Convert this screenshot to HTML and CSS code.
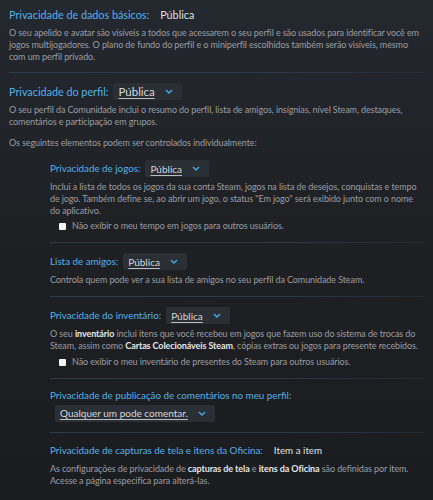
FILE: index.html
```html
<!DOCTYPE html>
<html lang="pt-BR">
<head>
<meta charset="utf-8">
<title>Configurações de privacidade</title>
<link rel="stylesheet" href="styles.css">
</head>
<body>
<main class="privacy">
  <section class="block">
    <div class="row">
      <span class="label">Privacidade de dados básicos:</span>
      <span class="value">Pública</span>
    </div>
    <p class="desc">O seu apelido e avatar são visíveis a todos que acessarem o seu perfil e são usados para identificar você em jogos multijogadores. O plano de fundo do perfil e o miniperfil escolhidos também serão visíveis, mesmo com um perfil privado.</p>
  </section>

  <section class="block">
    <div class="row">
      <span class="label">Privacidade do perfil:</span>
      <span class="dropdown"><span class="dd-text">Pública</span><svg class="chev" viewBox="0 0 8 5" width="8" height="5"><path d="M1 1l3 3 3-3" fill="none" stroke="currentColor" stroke-width="1.4"/></svg></span>
    </div>
    <p class="desc">O seu perfil da Comunidade inclui o resumo do perfil, lista de amigos, insígnias, nível Steam, destaques, comentários e participação em grupos.</p>
    <p class="desc note">Os seguintes elementos podem ser controlados individualmente:</p>

    <div class="sub">
      <section class="block">
        <div class="row">
          <span class="label">Privacidade de jogos:</span>
          <span class="dropdown"><span class="dd-text">Pública</span><svg class="chev" viewBox="0 0 8 5" width="8" height="5"><path d="M1 1l3 3 3-3" fill="none" stroke="currentColor" stroke-width="1.4"/></svg></span>
        </div>
        <p class="desc">Inclui a lista de todos os jogos da sua conta Steam, jogos na lista de desejos, conquistas e tempo de jogo. Também define se, ao abrir um jogo, o status "Em jogo" será exibido junto com o nome do aplicativo.</p>
        <label class="check"><span class="box"></span>Não exibir o meu tempo em jogos para outros usuários.</label>
      </section>

      <section class="block">
        <div class="row">
          <span class="label">Lista de amigos:</span>
          <span class="dropdown"><span class="dd-text">Pública</span><svg class="chev" viewBox="0 0 8 5" width="8" height="5"><path d="M1 1l3 3 3-3" fill="none" stroke="currentColor" stroke-width="1.4"/></svg></span>
        </div>
        <p class="desc">Controla quem pode ver a sua lista de amigos no seu perfil da Comunidade Steam.</p>
      </section>

      <section class="block">
        <div class="row">
          <span class="label">Privacidade do inventário:</span>
          <span class="dropdown"><span class="dd-text">Pública</span><svg class="chev" viewBox="0 0 8 5" width="8" height="5"><path d="M1 1l3 3 3-3" fill="none" stroke="currentColor" stroke-width="1.4"/></svg></span>
        </div>
        <p class="desc">O seu <b>inventário</b> inclui itens que você recebeu em jogos que fazem uso do sistema de trocas do Steam, assim como <b>Cartas Colecionáveis Steam</b>, cópias extras ou jogos para presente recebidos.</p>
        <label class="check check-wide"><span class="box"></span>Não exibir o meu inventário de presentes do Steam para outros usuários.</label>
      </section>

      <section class="block">
        <div class="label label-line">Privacidade de publicação de comentários no meu perfil:</div>
        <span class="dropdown dropdown-wide"><span class="dd-text">Qualquer um pode comentar.</span><svg class="chev" viewBox="0 0 8 5" width="8" height="5"><path d="M1 1l3 3 3-3" fill="none" stroke="currentColor" stroke-width="1.4"/></svg></span>
      </section>

      <section class="block">
        <div class="row">
          <span class="label">Privacidade de capturas de tela e itens da Oficina:</span>
          <span class="value">Item a item</span>
        </div>
        <p class="desc">As configurações de privacidade de <b>capturas de tela</b> e <b>itens da Oficina</b> são definidas por item. Acesse a página específica para alterá-las.</p>
      </section>
    </div>
  </section>
</main>
</body>
</html>
```

FILE: styles.css
```css
html, body {
  margin: 0;
  padding: 0;
}

body {
  width: 433px;
  min-height: 500px;
  background: linear-gradient(180deg, #24282f 0px, #1e2024 230px, #1b1c20 500px);
  font-family: "Lato", "Noto Sans", sans-serif;
  color: #9a9da2;
}

.privacy {
  padding: 6px 8px 0 9px;
}

.block + .block {
  padding-top: 10px;
}

/* thin rule under each block */
.block::after {
  content: "";
  display: block;
  height: 1px;
  margin-top: 9px;
  background: linear-gradient(90deg, #2b3c4d 0%, #2a394a 60%, rgba(40, 52, 66, 0.5) 100%);
}

.block:has(.sub)::after,
.sub .block:last-child::after {
  display: none;
}

.row {
  display: flex;
  align-items: center;
  gap: 5px;
  height: 17px;
}

.label {
  font-size: 10.8px;
  color: #56b1e8;
  line-height: 17px;
  white-space: nowrap;
}

.value {
  font-size: 10.8px;
  color: #dfe1e3;
  line-height: 17px;
  margin-left: 6px;
}

.dropdown {
  display: inline-flex;
  align-items: center;
  height: 17px;
  padding: 0 9px 0 5px;
  gap: 10px;
  background: #2a2e35;
  border-radius: 2px;
}

.dd-text {
  font-size: 11.5px;
  color: #d6d8da;
  text-decoration: underline;
  text-underline-offset: 2px;
  text-decoration-color: #b9bcc0;
}

.chev {
  color: #4aa7e8;
  display: block;
}

.desc {
  margin: 4px 0 0;
  font-size: 9px;
  letter-spacing: -0.1px;
  line-height: 12px;
  color: #9a9da2;
}

.desc b {
  font-weight: 700;
  color: #e4e6e8;
}

.note {
  margin-top: 9px;
}

/* individually controlled settings, indented under the profile */
.sub {
  margin-left: 41px;
  margin-top: 11px;
}

.sub .block::after {
  margin-top: 10px;
}

.sub .label,
.sub .value {
  font-size: 9.8px;
}

.sub .dd-text {
  font-size: 10px;
}

.check {
  display: flex;
  align-items: center;
  gap: 6px;
  margin: 3px 0 0 9px;
  font-size: 9px;
  letter-spacing: -0.1px;
  line-height: 12px;
  color: #9a9da2;
}

.check-wide {
  margin-top: 4px;
}

.box {
  width: 7px;
  height: 7px;
  background: #f3f3f3;
  border-radius: 1px;
  flex: none;
}

.label-line {
  display: block;
  line-height: 12px;
}

.dropdown-wide {
  margin: -3px 0 0 5px;
}

.sub .block:last-child {
  padding-top: 9px;
}
```
